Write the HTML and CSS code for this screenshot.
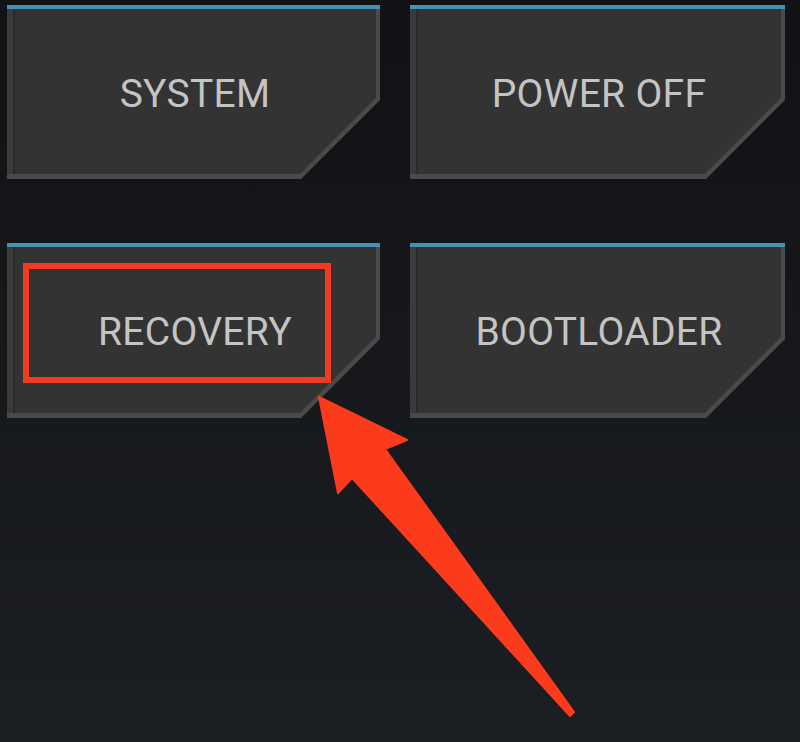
FILE: index.html
```html
<!DOCTYPE html>
<html>
<head>
<meta charset="utf-8">
<link rel="stylesheet" href="styles.css">
</head>
<body>
<main class="grid">
  <div class="btn">
    <div class="bar"></div>
    <div class="frame"><div class="fill"><span class="label">SYSTEM</span></div></div>
  </div>
  <div class="btn">
    <div class="bar"></div>
    <div class="frame"><div class="fill"><span class="label">POWER OFF</span></div></div>
  </div>
  <div class="btn">
    <div class="bar"></div>
    <div class="frame"><div class="fill"><span class="label">RECOVERY</span></div></div>
  </div>
  <div class="btn">
    <div class="bar"></div>
    <div class="frame"><div class="fill"><span class="label">BOOTLOADER</span></div></div>
  </div>
</main>
<svg class="annot" width="800" height="742" viewBox="0 0 800 742">
  <rect x="26" y="266" width="302" height="114" fill="none" stroke="#f23b21" stroke-width="6"/>
  <polygon points="319,397 407,440 385,449 574,712 570,716 352,478 338,493" fill="#fc3b1d" stroke="#fc3b1d" stroke-width="2" stroke-linejoin="round"/>
</svg>
</body>
</html>
```
FILE: styles.css
```css
html, body {
  margin: 0;
  height: 100%;
}
body {
  background: linear-gradient(180deg, #111215 0%, #16181c 50%, #1b1e23 100%);
  position: relative;
  overflow: hidden;
  font-family: Roboto, "Liberation Sans", sans-serif;
}
.grid {
  display: grid;
  grid-template-columns: 373px 375px;
  grid-template-rows: 174px 175px;
  column-gap: 30px;
  row-gap: 64px;
  padding: 5px 0 0 7px;
}
.btn {
  display: flex;
  flex-direction: column;
}
.bar {
  height: 4px;
  background: #4592b8;
  flex: none;
}
.frame {
  flex: 1;
  display: flex;
  background: #4a4a4b;
  padding: 0 4px 5px 0;
  clip-path: polygon(0 0, 100% 0, 100% calc(100% - 79px), calc(100% - 79px) 100%, 0 100%);
}
.fill {
  flex: 1;
  display: flex;
  align-items: center;
  justify-content: center;
  background: #333334;
  border-left: 6px solid #3a3a3b;
  box-shadow: inset 2px 0 0 #2a2a2b;
  clip-path: polygon(0 0, 100% 0, 100% calc(100% - 76px), calc(100% - 76px) 100%, 0 100%);
}
.label {
  color: #c4c4c4;
  font-size: 39px;
  letter-spacing: 0.3px;
  padding: 4px 0 0 1px;
}
.annot {
  position: absolute;
  left: 0;
  top: 0;
  pointer-events: none;
}
```
